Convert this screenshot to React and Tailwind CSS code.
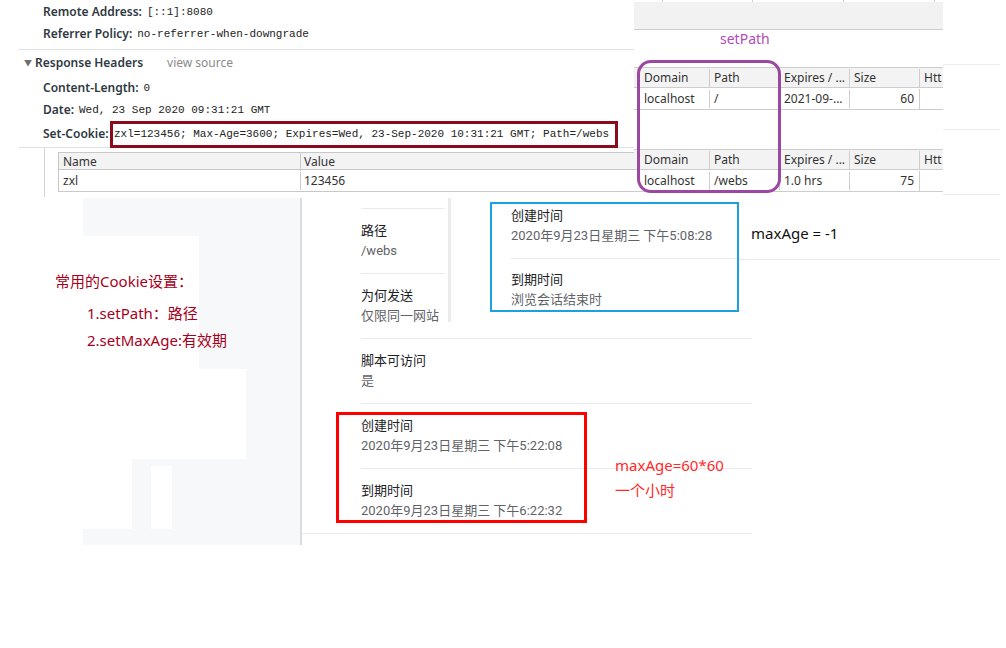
import React from 'react'

const SANS = "font-['Noto_Sans','Noto_Sans_CJK_SC',sans-serif]"
const MONO = "font-['Liberation_Mono',monospace]"
const CHROME = "font-['Roboto','Noto_Sans_CJK_SC',sans-serif]"

function HeaderRow({ label, value }) {
  return (
    <div className="flex h-[22px] items-center gap-[5px]">
      <span className="font-semibold">{label}</span>
      <span className={`${MONO} text-[11px] text-[#222]`}>{value}</span>
    </div>
  )
}

function HeadersPanel() {
  return (
    <div className={`absolute left-0 top-0 w-[634px] text-[12px] text-[#303942] ${SANS}`}>
      <div className="pl-[43px] pt-[1px]">
        <HeaderRow label="Remote Address:" value="[::1]:8080" />
        <HeaderRow label="Referrer Policy:" value="no-referrer-when-downgrade" />
      </div>
      <div className="ml-[19px] mt-[4px] border-y border-[#e0e0e0]">
        <div className="flex h-[26px] items-center pl-[5px]">
          <span className="text-[8px] text-[#6e6e6e]">▼</span>
          <span className="ml-[3px] font-semibold">Response Headers</span>
          <span className="ml-[24px] text-[#8a8a8a]">view source</span>
        </div>
        <div className="pl-[24px] pt-[1px]">
          <HeaderRow label="Content-Length:" value="0" />
          <HeaderRow label="Date:" value="Wed, 23 Sep 2020 09:31:21 GMT" />
          <div className="flex h-[26px] items-center">
            <span className="w-[67px] font-semibold">Set-Cookie:</span>
            <div className={`${MONO} flex h-[27px] w-[508px] items-center border-[3px] border-[#8b0a1c] pl-[1px] text-[11px] text-[#222]`}>
              zxl=123456; Max-Age=3600; Expires=Wed, 23-Sep-2020 10:31:21 GMT; Path=/webs
            </div>
          </div>
        </div>
      </div>
    </div>
  )
}

function NameValueTable() {
  return (
    <div className={`absolute left-[44px] top-[148px] h-[49px] w-[590px] border-l border-[#d4d4d4] pl-[13px] pt-[4px] text-[12px] text-[#333] ${SANS}`}>
      <div className="border-y border-l border-[#c8c8c8]">
        <div className="grid h-[17px] grid-cols-[241px_1fr] items-center border-b border-[#c8c8c8] bg-[#f3f3f3]">
          <span className="pl-[4px]">Name</span>
          <span className="border-l border-[#c8c8c8] pl-[3px]">Value</span>
        </div>
        <div className="grid h-[21px] grid-cols-[241px_1fr] items-center">
          <span className="pl-[4px]">zxl</span>
          <span className="border-l border-[#c8c8c8] pl-[3px]">123456</span>
        </div>
      </div>
    </div>
  )
}

function CookieTable({ top, path, expires, size }) {
  const cols = 'grid grid-cols-[75px_70px_70px_70px_24px]'
  return (
    <div className={`absolute left-[634px] w-[309px] overflow-hidden border-y border-[#cdcdcd] text-[12px] text-[#333] ${SANS}`} style={{ top }}>
      <div className={`${cols} h-[20px] items-center border-b border-[#cdcdcd] bg-[#f3f3f3]`}>
        <span className="pl-[10px]">Domain</span>
        <span className="border-l border-[#cdcdcd] pl-[4px]">Path</span>
        <span className="border-l border-[#cdcdcd] pl-[4px]">Expires / ...</span>
        <span className="border-l border-[#cdcdcd] pl-[4px]">Size</span>
        <span className="whitespace-nowrap border-l border-[#cdcdcd] pl-[4px]">Htt</span>
      </div>
      <div className={`${cols} h-[21px] items-center pt-[1px]`}>
        <span className="pl-[10px]">localhost</span>
        <span className="border-l border-[#cdcdcd] pl-[4px]">{path}</span>
        <span className="border-l border-[#cdcdcd] pl-[4px]">{expires}</span>
        <span className="border-l border-[#cdcdcd] pr-[5px] text-right">{size}</span>
        <span className="h-full border-l border-[#cdcdcd]" />
      </div>
    </div>
  )
}

function SettingItem({ label, value, wide }) {
  return (
    <div className={`h-[65px] border-t border-[#e8eaed] pt-[12px] ${wide ? '' : 'whitespace-nowrap'}`}>
      <div className="text-[13px] leading-[20px] text-[#202124]">{label}</div>
      <div className="text-[13px] leading-[20px] text-[#5f6368]">{value}</div>
    </div>
  )
}

function DetailPanel() {
  return (
    <div className={`absolute left-[300px] top-[198px] h-[347px] w-[452px] border-l-2 border-[#dadce0] ${CHROME}`}>
      <div className="h-[124px] w-[149px] border-r-[3px] border-[#ebebeb] pl-[59px] pt-[10px]">
        <div className="w-[84px] overflow-hidden">
          <SettingItem label="路径" value="/webs" />
          <SettingItem label="为何发送" value="仅限同一网站" />
        </div>
      </div>
      <div className="ml-[59px] mt-[16px]">
        <SettingItem label="脚本可访问" value="是" wide />
        <SettingItem label="创建时间" value="2020年9月23日星期三 下午5:22:08" wide />
        <SettingItem label="到期时间" value="2020年9月23日星期三 下午6:22:32" wide />
      </div>
      <div className="border-t border-[#e8eaed]" />
    </div>
  )
}

function BlueBox() {
  return (
    <div className={`absolute left-[490px] top-[202px] h-[110px] w-[249px] overflow-hidden border-2 border-[#1ba1e2] bg-white ${CHROME}`}>
      <div className="pl-[19px] pt-[2px]">
        <div className="text-[13px] leading-[20px] text-[#202124]">创建时间</div>
        <div className="text-[13px] leading-[20px] text-[#5f6368]">2020年9月23日星期三 下午5:08:28</div>
      </div>
      <div className="ml-[19px] mt-[12px] border-t border-[#e8eaed] pt-[11px]">
        <div className="text-[13px] leading-[20px] text-[#202124]">到期时间</div>
        <div className="text-[13px] leading-[20px] text-[#5f6368]">浏览会话结束时</div>
      </div>
    </div>
  )
}

function GrayShape() {
  return (
    <div className="absolute left-[83px] top-[198px] h-[347px] w-[217px] bg-[#f7f8fa]">
      <div className="absolute left-0 top-[38px] h-[133px] w-[116px] bg-white" />
      <div className="absolute left-0 top-[171px] h-[90px] w-[163px] bg-white" />
      <div className="absolute left-0 top-[261px] h-[70px] w-[49px] bg-white" />
      <div className="absolute left-[68px] top-[268px] h-[63px] w-[21px] bg-white" />
    </div>
  )
}

export default function App() {
  return (
    <div className={`relative h-[648px] w-[1006px] overflow-hidden bg-white ${SANS}`}>
      <HeadersPanel />
      <NameValueTable />

      {/* top-right table remnant */}
      <div className="absolute left-[634px] top-0 w-[309px]">
        <div className="grid h-[2px] grid-cols-[28px_90px_91px_91px_9px]">
          <span />
          <span className="border-l border-[#cdcdcd]" />
          <span className="border-l border-[#cdcdcd]" />
          <span className="border-l border-[#cdcdcd]" />
          <span className="border-l border-[#cdcdcd]" />
        </div>
        <div className="h-[28px] border-b border-[#cdcdcd] bg-[#f2f2f2]" />
      </div>

      <div className="absolute left-[720px] top-[28px] text-[14px] text-[#b54ab8]">setPath</div>

      <CookieTable top={67} path="/" expires="2021-09-..." size="60" />
      <CookieTable top={149} path="/webs" expires="1.0 hrs" size="75" />

      <div className="absolute left-[637px] top-[60px] h-[133px] w-[144px] rounded-[14px] border-[3px] border-[#9b48a3]" />

      {/* faint separators on the right edge */}
      <div className="absolute left-[943px] top-[64px] w-[57px] border-t border-[#ececec]" />
      <div className="absolute left-[943px] top-[129px] w-[57px] border-t border-[#ececec]" />
      <div className="absolute left-[943px] top-[194px] w-[57px] border-t border-[#ececec]" />
      <div className="absolute left-[739px] top-[259px] w-[261px] border-t border-[#e8eaed]" />

      <GrayShape />
      <DetailPanel />
      <BlueBox />

      <div className="absolute left-[751px] top-[222px] text-[15px] text-[#111]">maxAge = -1</div>

      <div className="absolute left-[336px] top-[412px] h-[111px] w-[251px] border-[3px] border-[#ff0000]" />

      <div className="absolute left-[55px] top-[270px] text-[15px] leading-[22px] text-[#a8001c]">
        <div>常用的Cookie设置：</div>
        <div className="mt-[10px] pl-[32px]">1.setPath：路径</div>
        <div className="mt-[5px] pl-[32px]">2.setMaxAge:有效期</div>
      </div>

      <div className="absolute left-[615px] top-[454px] text-[15px] leading-[22px] text-[#ff2a2a]">
        <div>maxAge=60*60</div>
        <div className="mt-[3px]">一个小时</div>
      </div>
    </div>
  )
}
